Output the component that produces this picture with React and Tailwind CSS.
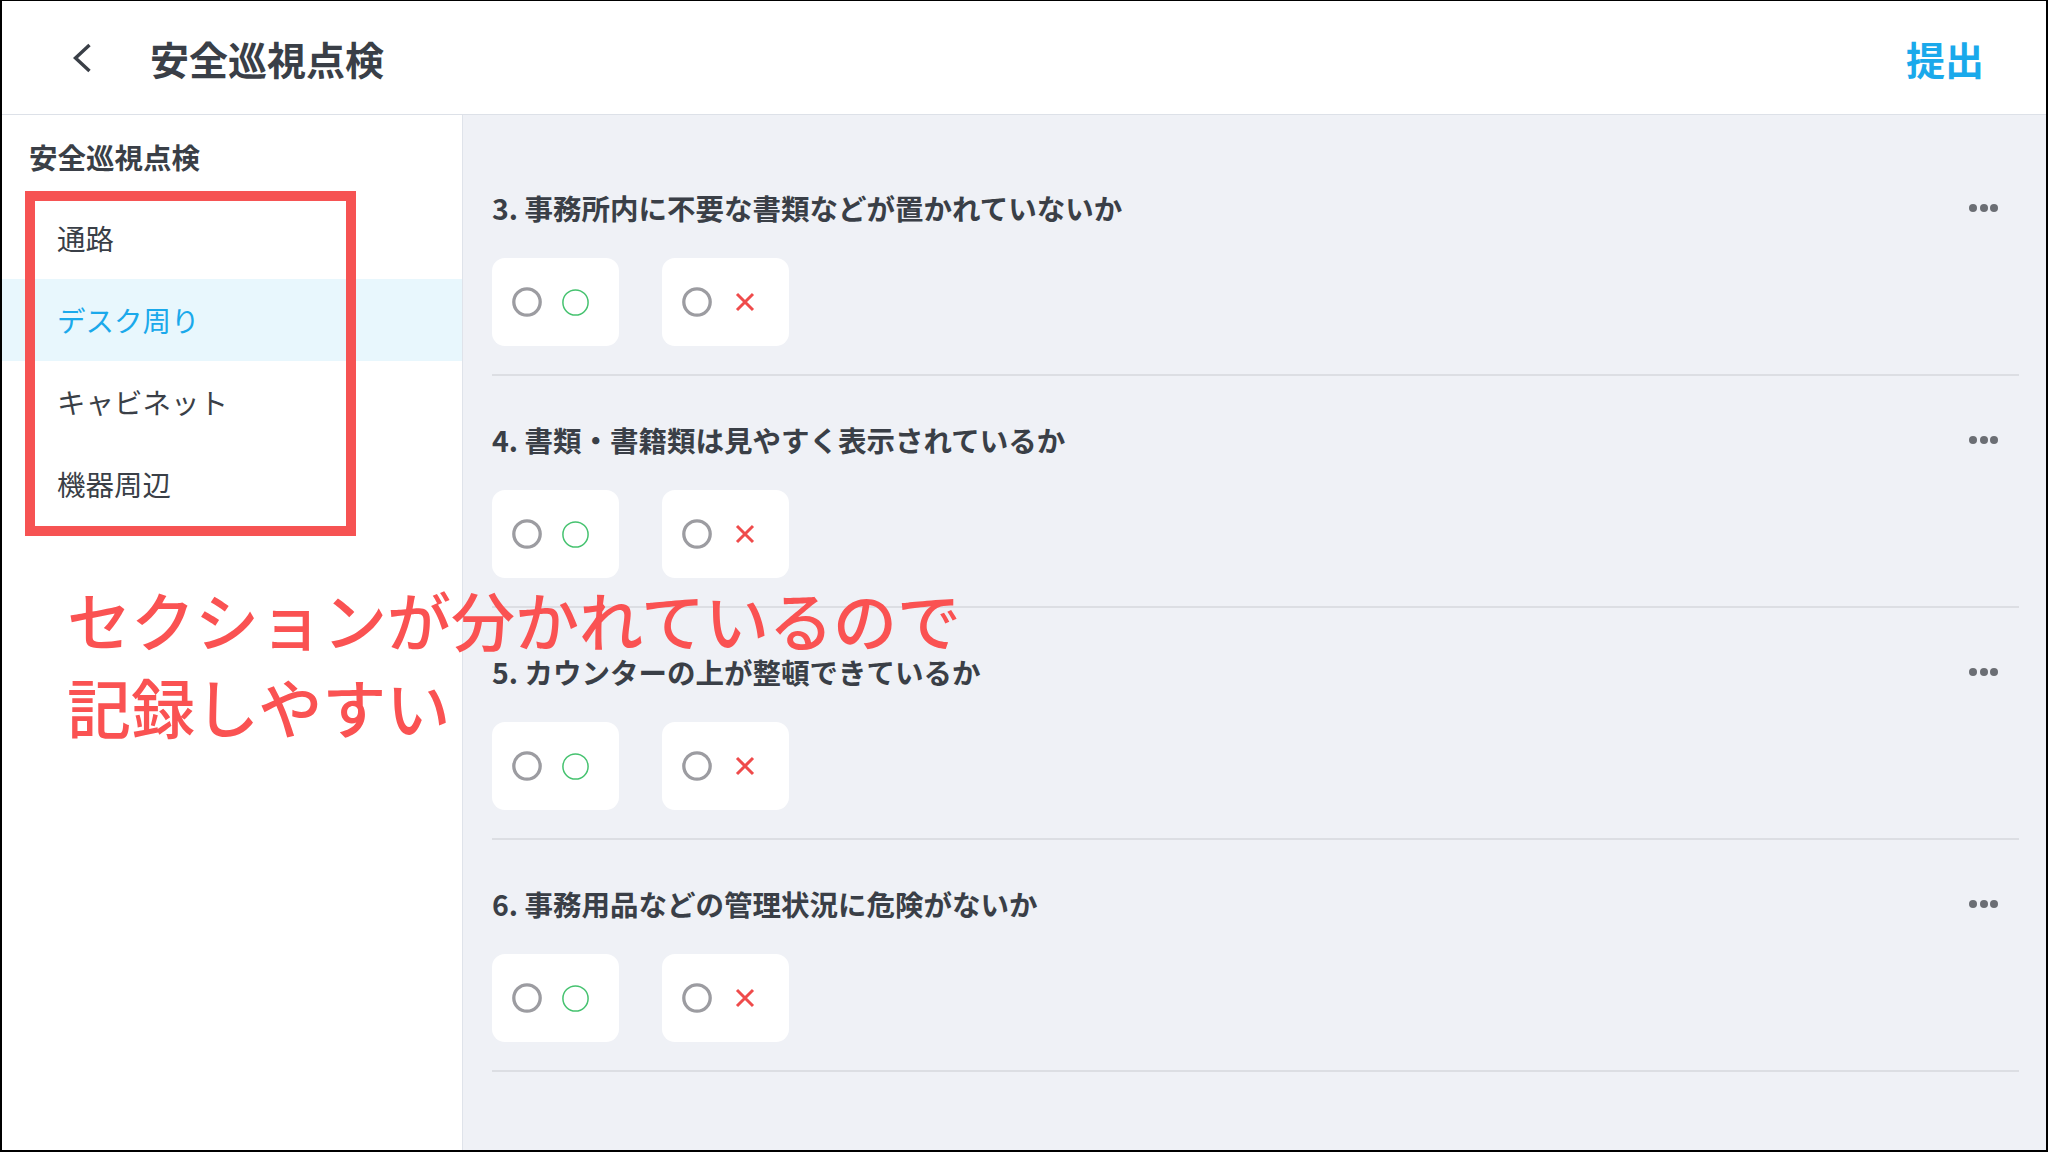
import React from "react";

const items = ["通路", "デスク周り", "キャビネット", "機器周辺"];
const questions = [
  "3. 事務所内に不要な書類などが置かれていないか",
  "4. 書類・書籍類は見やすく表示されているか",
  "5. カウンターの上が整頓できているか",
  "6. 事務用品などの管理状況に危険がないか",
];

function GrayRadio() {
  return (
    <svg width="30" height="30" viewBox="0 0 30 30" className="shrink-0">
      <circle cx="15" cy="15" r="13.2" fill="none" stroke="#9c9ca1" strokeWidth="3.3" />
    </svg>
  );
}

function Question({ text }) {
  return (
    <div className="pt-[46px] pb-[28px] border-b-2 border-[#dcdee3]">
      <div className="flex items-center justify-between h-[36px]">
        <div className="text-[28.5px] leading-[36px] font-bold text-[#3a3f47]">{text}</div>
        <div className="flex items-center gap-[2.5px] pr-[21px]">
          <span className="w-[8px] h-[8px] rounded-full bg-[#6b6e74]" />
          <span className="w-[8px] h-[8px] rounded-full bg-[#6b6e74]" />
          <span className="w-[8px] h-[8px] rounded-full bg-[#6b6e74]" />
        </div>
      </div>
      <div className="mt-[32px] flex gap-[43px]">
        <div className="w-[127px] h-[88px] rounded-[13px] bg-white flex items-center pl-[20px]">
          <GrayRadio />
          <svg width="27" height="27" viewBox="0 0 27 27" className="ml-[20px] shrink-0">
            <circle cx="13.5" cy="13.5" r="12.6" fill="none" stroke="#45c26f" strokeWidth="1.5" />
          </svg>
        </div>
        <div className="w-[127px] h-[88px] rounded-[13px] bg-white flex items-center pl-[20px]">
          <GrayRadio />
          <svg width="20" height="20" viewBox="0 0 20 20" className="ml-[23px] shrink-0">
            <path d="M2 2 L18 18 M18 2 L2 18" stroke="#ef4b4b" strokeWidth="3" strokeLinecap="butt" />
          </svg>
        </div>
      </div>
    </div>
  );
}

export default function App() {
  return (
    <div className="w-[2048px] h-[1152px] border-black border-x-2 border-b-2 border-t flex flex-col relative overflow-hidden bg-white font-['Noto_Sans_CJK_JP',sans-serif] text-[#3a3f47]">
      <header className="h-[114px] shrink-0 border-b border-[#dde1e8] bg-white flex items-center pl-[70px] pr-[62px]">
        <svg width="20" height="30" viewBox="0 0 20 30" className="shrink-0">
          <path d="M17.5 2 L3.5 15 L17.5 28" fill="none" stroke="#3a3f47" strokeWidth="3.4" strokeLinejoin="miter" />
        </svg>
        <h1 className="ml-[58px] text-[39px] leading-[48px] font-bold text-[#3a3f47]">安全巡視点検</h1>
        <button className="ml-auto text-[39px] leading-[48px] font-bold text-[#1aa9eb]">提出</button>
      </header>
      <div className="flex flex-1 min-h-0">
        <aside className="w-[461px] shrink-0 border-r border-[#dfe3ea] bg-white pt-[24px]">
          <div className="pl-[27px] text-[28.5px] leading-[36px] font-bold text-[#3a3f47]">安全巡視点検</div>
          <ul className="mt-[22px]">
            {items.map((it, i) => (
              <li
                key={it}
                className={
                  i === 1
                    ? "h-[82px] flex items-center pl-[55px] text-[28.5px] bg-[#e8f7fd] text-[#1aa9eb]"
                    : "h-[82px] flex items-center pl-[55px] text-[28.5px] text-[#3a3f47]"
                }
              >
                {it}
              </li>
            ))}
          </ul>
        </aside>
        <main className="flex-1 bg-[#eff1f6] pt-[29px] pl-[29px] pr-[27px]">
          {questions.map((q) => (
            <Question key={q} text={q} />
          ))}
        </main>
      </div>

      <div className="absolute left-[23px] top-[190px] w-[331px] h-[345px] border-[10px] border-[#f65353]" />
      <div className="absolute left-[65px] top-[585px] flex flex-col gap-[23px] text-[64px] leading-[64px] font-medium text-[#fa5252] whitespace-nowrap">
        <div>セクションが分かれているので</div>
        <div>記録しやすい</div>
      </div>
    </div>
  );
}
